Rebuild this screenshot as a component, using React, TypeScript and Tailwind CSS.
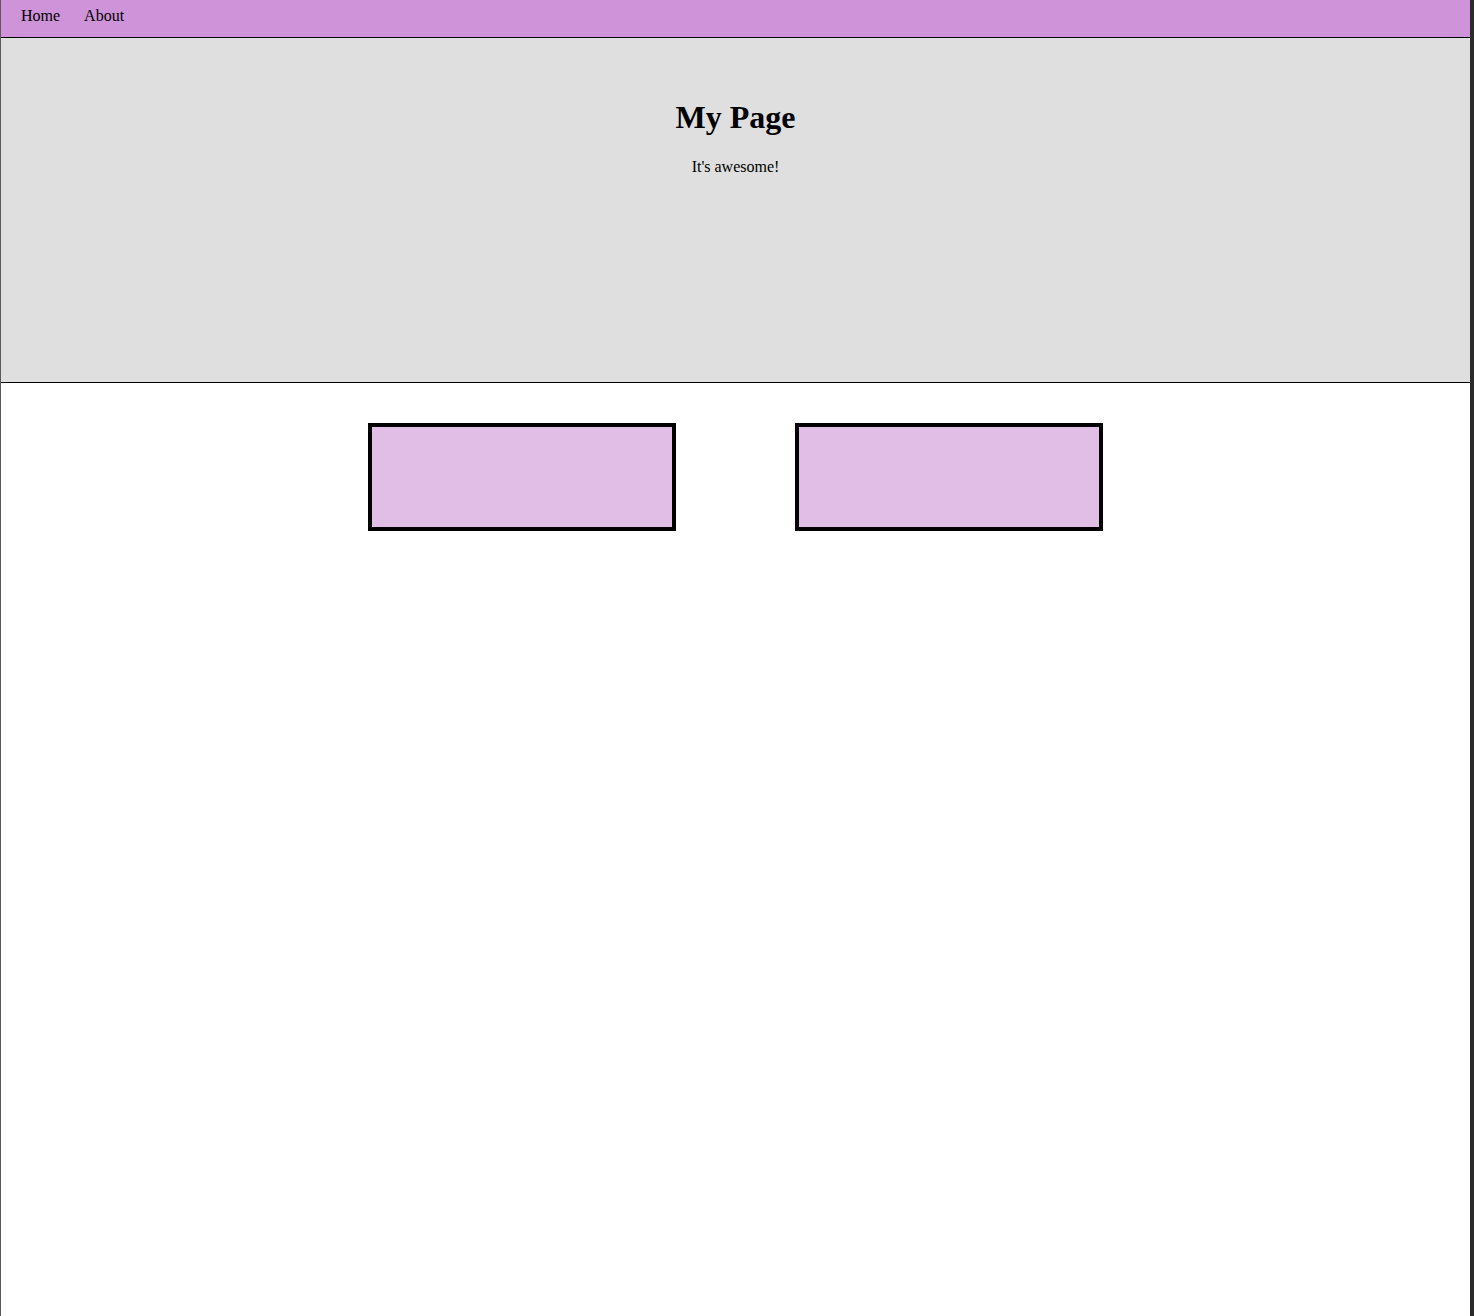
import React from 'react';

const NavLink: React.FC<{ label: string }> = ({ label }) => (
  <a href="#" className="text-black no-underline leading-[18px]">
    {label}
  </a>
);

const Box: React.FC = () => (
  <div className="w-[308px] h-[108px] border-4 border-black bg-[#e0bee6]" />
);

export default function App() {
  return (
    <div className="flex min-h-[1316px] w-full bg-white text-black text-[16px] font-['Liberation_Serif','Times_New_Roman',serif]">
      <div className="flex-1 flex flex-col border-l border-[#5a5a5a]">
        {/* Nav */}
        <nav className="h-[38px] bg-[#cf93d9] border-b border-black flex gap-[24px] pl-[20px] pt-[7px]">
          <NavLink label="Home" />
          <NavLink label="About" />
        </nav>

        {/* Hero */}
        <header className="h-[345px] bg-[#dfdfdf] border-b border-black flex flex-col items-center pt-[61px]">
          <h1 className="text-[32px] leading-[37px] font-bold">My Page</h1>
          <p className="mt-[22px] leading-[18px]">It's awesome!</p>
        </header>

        {/* Boxes */}
        <section className="flex justify-center gap-[119px] pt-[40px]">
          <Box />
          <Box />
        </section>
      </div>
      <div className="w-[4px] bg-[#2b2b2b]" />
    </div>
  );
}
